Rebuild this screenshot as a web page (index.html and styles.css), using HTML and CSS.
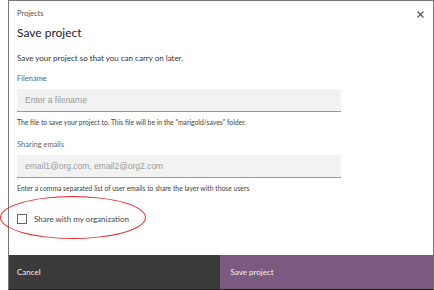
FILE: index.html
```html
<!DOCTYPE html>
<html lang="en">
<head>
    <meta charset="UTF-8"/>
    <title>Save project</title>
    <link rel="stylesheet" href="styles.css">
</head>
<body>

<div class="modal">
    <div class="modal-body">
        <div class="modal-head">
            <div>
                <div class="crumb">Projects</div>
                <h2>Save project</h2>
            </div>
            <button class="close-btn" aria-label="Close">
                <svg width="7" height="7" viewBox="0 0 7 7"><path d="M0.5 0.5L6.5 6.5M6.5 0.5L0.5 6.5" stroke="#555" stroke-width="1.1"/></svg>
            </button>
        </div>

        <p class="intro">Save your project so that you can carry on later.</p>

        <div class="form-group">
            <div class="field-label">Filename</div>
            <input name="filename" placeholder="Enter a filename"/>
            <div class="hint">The file to save your project to. This file will be in the "marigold/saves" folder.</div>
        </div>

        <div class="form-group">
            <div class="field-label">Sharing emails</div>
            <input name="emails" placeholder="email1@org.com, email2@org2.com"/>
            <div class="hint">Enter a comma separated list of user emails to share the layer with those users</div>
        </div>

        <div class="check">
            <span class="box"></span>
            Share with my organization
        </div>
    </div>

    <div class="btn-group">
        <button class="btn cancel-btn">Cancel</button>
        <button class="btn save-btn">Save project</button>
    </div>
</div>

<div class="circle"></div>

</body>
</html>
```

FILE: styles.css
```css
body {
  margin: 0;
  background: #ffffff;
  font-family: 'Lato', sans-serif;
  position: relative;
}

.modal {
  margin-left: 8px;
  width: 424px;
  height: 288px;
  border: 1px solid #777777;
  border-bottom: 1px solid #222222;
  display: flex;
  flex-direction: column;
}

.modal-body {
  flex: 1;
  padding: 7px 8px 0 8px;
}

.modal-head {
  display: flex;
  justify-content: space-between;
  align-items: flex-start;
}

.crumb {
  font-size: 7.5px;
  color: #555555;
  line-height: 12px;
}

h2 {
  margin: 5px 0 0 0;
  font-size: 12px;
  font-weight: 400;
  color: #222222;
  line-height: 16px;
}

.close-btn {
  background: none;
  border: none;
  padding: 0;
  margin: 3px 1px 0 0;
  line-height: 0;
  cursor: pointer;
}

.intro {
  margin: 11px 0 0 0;
  font-size: 8px;
  color: #333333;
  line-height: 12px;
}

.form-group {
  margin-top: 10px;
}

.field-label {
  font-size: 7.5px;
  color: #666666;
  line-height: 10px;
  margin-bottom: 5px;
}

.form-group input {
  display: block;
  box-sizing: border-box;
  width: 324px;
  height: 23px;
  padding: 0 8px;
  font-family: 'Liberation Sans', sans-serif;
  font-size: 8.5px;
  border: none;
  border-bottom: 1px solid #999999;
  background-color: #f2f2f2;
  color: #333333;
}

.form-group input::placeholder {
  color: #9a9a9a;
}

.hint {
  margin-top: 5px;
  padding-bottom: 3px;
  font-size: 6.8px;
  color: #444444;
  line-height: 10px;
}

.check {
  margin-top: 17px;
  display: flex;
  align-items: center;
  gap: 7px;
  font-size: 8px;
  line-height: 12px;
  color: #444444;
}

.box {
  box-sizing: border-box;
  width: 10px;
  height: 10px;
  border: 1px solid #666666;
  background: #ffffff;
}

.btn-group {
  display: flex;
  height: 34px;
}

.btn {
  flex: 1;
  border: none;
  text-align: left;
  padding: 0 8px;
  font-family: 'Lato', sans-serif;
  font-size: 8px;
  color: #f2f2f2;
  cursor: pointer;
}

.cancel-btn {
  background-color: #3a3a3a;
}

.save-btn {
  background-color: #7b5a80;
  padding-left: 11px;
}

.circle {
  position: absolute;
  left: 0;
  top: 196px;
  width: 144px;
  height: 41px;
  border: 1.5px solid #e8252a;
  border-radius: 50%;
}
```
